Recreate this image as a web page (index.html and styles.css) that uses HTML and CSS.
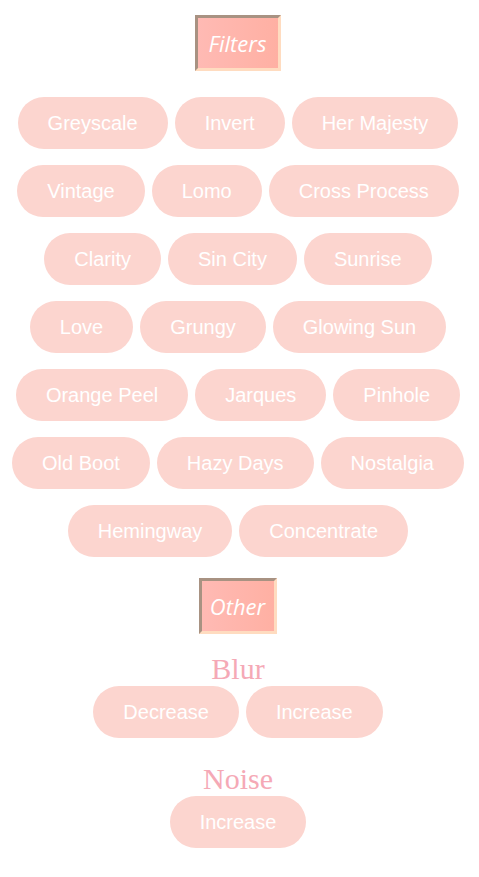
FILE: index.html
```html
<!DOCTYPE html>
<html lang="en">
<head>
  <meta charset="UTF-8" />
  <meta name="viewport" content="width=device-width, initial-scale=1.0" />
  <title>Photo Filters</title>
  <link rel="stylesheet" href="styles.css">
</head>
<body>
  <h2 class="section-title">Filters</h2>
  <div class="filter-list">
    <button class="pill">Greyscale</button>
    <button class="pill">Invert</button>
    <button class="pill">Her Majesty</button>
    <button class="pill">Vintage</button>
    <button class="pill">Lomo</button>
    <button class="pill">Cross Process</button>
    <button class="pill">Clarity</button>
    <button class="pill">Sin City</button>
    <button class="pill">Sunrise</button>
    <button class="pill">Love</button>
    <button class="pill">Grungy</button>
    <button class="pill">Glowing Sun</button>
    <button class="pill">Orange Peel</button>
    <button class="pill">Jarques</button>
    <button class="pill">Pinhole</button>
    <button class="pill">Old Boot</button>
    <button class="pill">Hazy Days</button>
    <button class="pill">Nostalgia</button>
    <button class="pill">Hemingway</button>
    <button class="pill">Concentrate</button>
  </div>
  <h2 class="section-title other">Other</h2>
  <div class="adjust">
    <h3>Blur</h3>
    <div class="filter-list">
      <button class="pill">Decrease</button>
      <button class="pill">Increase</button>
    </div>
  </div>
  <div class="adjust noise">
    <h3>Noise</h3>
    <div class="filter-list">
      <button class="pill">Increase</button>
    </div>
  </div>
</body>
</html>
```
FILE: styles.css
```css
body {
  margin: 8px 10px 8px 7px;
  text-align: center;
  font-family: "Liberation Sans", Arial, sans-serif;
  background: #fff;
}
.section-title {
  display: inline-block;
  margin: 7px 0 0;
  padding: 9px 11px 9px 10px;
  font-family: "Open Sans", sans-serif;
  font-style: italic;
  font-weight: normal;
  font-size: 22px;
  line-height: 32px;
  color: #fff;
  background: linear-gradient(to right, #ffbab4, #ffb0a3);
  border: 3px solid;
  border-color: #a89282 #ffdcc0 #ffdcc0 #a89282;
}
.section-title.other {
  margin-top: 21px;
  padding: 9px 9px 9px 8px;
}
.filter-list {
  display: flex;
  flex-wrap: wrap;
  justify-content: center;
  gap: 16px 7px;
}
body > .filter-list {
  margin-top: 26px;
}
.pill {
  padding: 15px 30px;
  font-family: "Liberation Sans", Arial, sans-serif;
  font-size: 20px;
  line-height: 22px;
  color: #fff;
  background-color: #fcd5cf;
  border: none;
  border-radius: 26px;
  cursor: pointer;
}
.adjust h3 {
  margin: 18px 0 0;
  font-family: "Liberation Serif", "Times New Roman", serif;
  font-weight: normal;
  font-size: 30px;
  line-height: 34px;
  color: #f5a9b6;
}
.adjust.noise h3 {
  margin-top: 24px;
}
```
